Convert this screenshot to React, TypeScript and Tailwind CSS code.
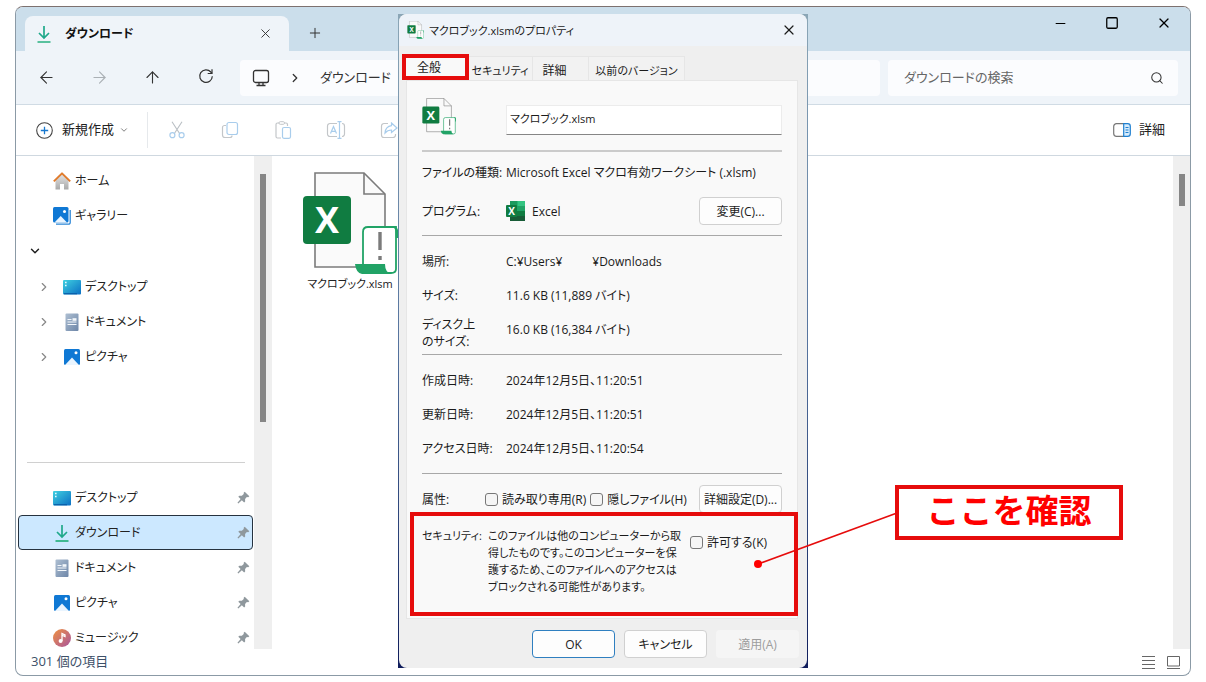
import React from "react";
import {
  ArrowLeft,
  ArrowRight,
  ArrowUp,
  ChevronDown,
  ChevronRight,
  Minus,
  Plus,
  Search,
  Square,
  X,
} from "lucide-react";

const DownloadIcon = () => (
  <svg width="18" height="18" viewBox="0 0 18 18" fill="none">
    <path d="M9 1v12M4 8l5 5 5-5" stroke="#1fa98b" strokeWidth="1.7" />
    <path d="M2.5 17h13" stroke="#27b07f" strokeWidth="1.7" />
  </svg>
);

const HomeIcon = () => (
  <svg width="18" height="18" viewBox="0 0 18 18" fill="none">
    <defs>
      <linearGradient id="home" x1="0" y1="0" x2="0" y2="1">
        <stop offset="0" stopColor="#e4e4e4" />
        <stop offset="1" stopColor="#a9a9a9" />
      </linearGradient>
    </defs>
    <path d="M2.500 8L9 2l6.500 6v9.500H11V12H7v5.500H2.500z" fill="url(#home)" />
    <path d="M.8 9.400L9 1.400l8.200 8" stroke="#e07b2c" strokeWidth="2" strokeLinejoin="round" />
  </svg>
);

const PictureIcon = ({ stacked }: { stacked?: boolean }) =>
  stacked ? (
    <svg width="18" height="18" viewBox="0 0 18 18" fill="none">
      <path d="M3 17.200h12.500a1.700 1.700 0 0 0 1.700-1.700V3" stroke="#2b86d6" strokeWidth="1.300" />
      <rect x="0" y="0" width="15.500" height="15.500" rx="1.500" fill="#0f78d4" />
      <path d="M1.500 15.500L7.700 9l6.300 6.500z" fill="#eaf5ff" />
      <circle cx="11.500" cy="4.500" r="1.500" fill="#fff" />
    </svg>
  ) : (
    <svg width="18" height="18" viewBox="0 0 18 18" fill="none">
      <rect x="1" y="1" width="16" height="16" rx="1.500" fill="#0f78d4" />
      <path d="M2 17l7-7.500 7 7.500z" fill="#eaf5ff" />
      <circle cx="13" cy="4.800" r="1.500" fill="#fff" />
    </svg>
  );

const DesktopIcon = () => (
  <svg width="18" height="18" viewBox="0 0 18 18" fill="none">
    <defs>
      <linearGradient id="desk" x1="0" y1="0" x2="1" y2="1">
        <stop offset="0" stopColor="#3fd0e0" />
        <stop offset="1" stopColor="#0b6fc4" />
      </linearGradient>
    </defs>
    <rect x="0" y="2" width="18" height="14.5" rx="1" fill="url(#desk)" />
    <path d="M2 4.5h1.6M2 7.5h1.6" stroke="#e3fbff" strokeWidth="1.4" />
    <path d="M1 15.700h13" stroke="#0a5da8" strokeWidth="1.2" />
  </svg>
);

const DocumentIcon = () => (
  <svg width="18" height="18" viewBox="0 0 18 18" fill="none">
    <defs>
      <linearGradient id="docu" x1="0" y1="0" x2="1" y2="1">
        <stop offset="0" stopColor="#aebfd2" />
        <stop offset="1" stopColor="#6d86a8" />
      </linearGradient>
    </defs>
    <rect x="2.5" y="0.5" width="13" height="17.5" rx="1" fill="url(#docu)" />
    <path d="M4.5 6.5h4M4.5 9h9M4.5 11.5h9" stroke="#f3f7fb" strokeWidth="1.2" />
    <rect x="9.5" y="5.2" width="4" height="2.6" fill="#f3f7fb" />
  </svg>
);

const MusicIcon = () => (
  <svg width="18" height="18" viewBox="0 0 18 18" fill="none">
    <defs>
      <linearGradient id="mus" x1="0" y1="0" x2="1" y2="1">
        <stop offset="0" stopColor="#f0913f" />
        <stop offset="1" stopColor="#a8559f" />
      </linearGradient>
    </defs>
    <circle cx="9" cy="9" r="9" fill="url(#mus)" />
    <circle cx="7.6" cy="12" r="2" fill="#fff" />
    <path d="M9 12V4.5l3 1.5v1.6L9.6 6.5" stroke="#fff" strokeWidth="1.3" />
  </svg>
);

const PinIcon = () => (
  <svg width="13" height="13" viewBox="0 0 14 14" fill="#8f989d">
    <path d="M8.300.8l5 4.800-1.200 1-1.500-.1-1.900 2.100.1 2.600-1.100 1.100-2.500-2.400L1.400 13.400l-.9-.7L3.900 8.600 1.400 6.200l1.100-1.100 2.700.1L7.300 3.200l-.1-1.400z" />
  </svg>
);

const MonitorIcon = () => (
  <svg width="18" height="18" viewBox="0 0 18 18" fill="none" stroke="#333" strokeWidth="1.300">
    <rect x="1.500" y="1.500" width="15" height="12" rx="2" />
    <path d="M4.500 16.500h9M7 13.500v3M11 13.500v3" />
  </svg>
);

const RefreshIcon = () => (
  <svg width="16" height="16" viewBox="0 0 16 16" fill="none" stroke="currentColor" strokeWidth="1.200">
    <path d="M14.300 8.200A6.300 6.300 0 1 1 12.800 4L14 5.300" />
    <path d="M14 1.200v4.300H9.700" />
  </svg>
);

const MacroFileIcon = ({ width, height }: { width: number; height: number }) => (
  <svg width={width} height={height} viewBox="0 0 96 104" fill="none">
    <path d="M13 1h49l21 21v73H13z" fill="#fafafa" stroke="#7b7b7b" strokeWidth="1.6" />
    <path d="M62 1v21h21" stroke="#7b7b7b" strokeWidth="1.6" />
    <rect x="1" y="24" width="48" height="48" rx="4" fill="#107c41" />
    <text x="25" y="61" textAnchor="middle" fontSize="36" fontWeight="700" fill="#fff">
      X
    </text>
    <path d="M61 94V60q0-5 5-5h28v42q0 4-5 4H64z" fill="#fff" stroke="#21a366" strokeWidth="1.8" />
    <path d="M53 92h30q0 8 6 10H60q-6-1-7-10z" fill="#21a366" />
    <path d="M78 60v18M78 84v4" stroke="#7b7b7b" strokeWidth="3.4" />
    <path d="M90 54q4 1 4 12h2V58q-1-4-6-4z" fill="#21a366" />
  </svg>
);

const ExcelIcon = () => (
  <svg width="19" height="20" viewBox="0 0 19 20" fill="none">
    <rect x="4" y="0" width="15" height="20" rx="1" fill="#21a366" />
    <path d="M4 0h7.500v5H4z" fill="#1d9a5e" />
    <path d="M11.500 0H19v5h-7.500z" fill="#33c481" />
    <path d="M4 10h15v10H4z" fill="#107c41" />
    <path d="M4 15h15v5H4z" fill="#185c37" />
    <rect x="0" y="4" width="11" height="12" rx="1" fill="#107c41" />
    <text x="5.500" y="13.600" textAnchor="middle" fontSize="10" fontWeight="700" fill="#fff">
      X
    </text>
  </svg>
);

const CutIcon = () => (
  <svg width="18" height="18" viewBox="0 0 18 18" fill="none">
    <path d="M4 .8l7.600 11.700M14 .8L6.400 12.500" stroke="#b9bfc4" strokeWidth="1.100" />
    <circle cx="4.400" cy="14.200" r="2.500" stroke="#a9cdec" strokeWidth="1.200" />
    <circle cx="13.600" cy="14.200" r="2.500" stroke="#a9cdec" strokeWidth="1.200" />
  </svg>
);

const CopyIcon = () => (
  <svg width="18" height="18" viewBox="0 0 18 18" fill="none">
    <path d="M5 4.500H3.500a2 2 0 0 0-2 2v7.500a2.500 2.500 0 0 0 2.500 2.500h5a2 2 0 0 0 2-2" stroke="#c3c6c9" strokeWidth="1.200" />
    <rect x="6" y="1.500" width="10.500" height="12" rx="2" stroke="#a9cdec" strokeWidth="1.200" />
  </svg>
);

const PasteIcon = () => (
  <svg width="18" height="18" viewBox="0 0 18 18" fill="none">
    <path d="M7 17H3.500a1.500 1.500 0 0 1-1.500-1.500V3.500A1.500 1.500 0 0 1 3.500 2H12a1.500 1.500 0 0 1 1.500 1.500V5" stroke="#c3c6c9" strokeWidth="1.200" />
    <rect x="5" y=".7" width="5.500" height="2.600" rx="1.200" fill="#fff" stroke="#c3c6c9" />
    <rect x="8.500" y="6.500" width="8" height="10.800" rx="1.500" stroke="#a9cdec" strokeWidth="1.200" />
  </svg>
);

const RenameIcon = () => (
  <svg width="20" height="18" viewBox="0 0 20 18" fill="none">
    <path d="M11 2.500H4A2.500 2.500 0 0 0 1.500 5v8A2.500 2.500 0 0 0 4 15.500h7M16 2.500a2.500 2.500 0 0 1 2.500 2.500v8a2.500 2.500 0 0 1-2.500 2.500" stroke="#c3c6c9" strokeWidth="1.200" />
    <path d="M4.500 12.500L7.500 5.500l3 7M5.500 10.300h4M11.500.7h4M11.500 17.300h4M13.500.7v16.600" stroke="#a9cdec" strokeWidth="1.200" />
  </svg>
);

const ShareIcon = () => (
  <svg width="18" height="18" viewBox="0 0 18 18" fill="none">
    <path d="M8 2.500H4A2.500 2.500 0 0 0 1.500 5v9A2.500 2.500 0 0 0 4 16.500h9a2.500 2.500 0 0 0 2.500-2.500v-1" stroke="#c3c6c9" strokeWidth="1.200" />
    <path d="M11.500 2l5.500 5-5.500 4.500V9q-4 0-6.500 3 .5-6.500 6.500-7.300z" stroke="#a9cdec" strokeWidth="1.200" />
  </svg>
);

const DetailPaneIcon = () => (
  <svg width="18" height="14" viewBox="0 0 18 14" fill="none">
    <path d="M11 .7H3.500A2.800 2.800 0 0 0 .7 3.500v7a2.800 2.800 0 0 0 2.800 2.800H11" stroke="#777" strokeWidth="1.200" />
    <path d="M10.700.7h4A2.600 2.600 0 0 1 17.300 3.300v7.400a2.600 2.600 0 0 1-2.600 2.600h-4z" fill="#d6ebfb" stroke="#1f7fd0" strokeWidth="1.200" />
    <path d="M12.500 4.500h3M12.500 7h3M12.500 9.500h3" stroke="#1f7fd0" />
  </svg>
);

interface NavRowProps {
  icon: React.ReactNode;
  label: string;
  pinned?: boolean;
  nested?: boolean;
  selected?: boolean;
}

const NavRow = ({ icon, label, pinned, nested, selected }: NavRowProps) => (
  <a
    href="#"
    className={`flex h-[35px] shrink-0 items-center gap-1 ml-0.5 mr-px border rounded-sm text-xs text-[#222] ${
      selected ? "border-[#26323f] bg-[#cce8ff]" : "border-transparent"
    } ${nested ? "pl-[18px]" : "pl-[34px]"}`}
  >
    {nested && <ChevronRight size={14} strokeWidth={2} className="mr-2 text-[#888]" />}
    {icon}
    <span>{label}</span>
    {pinned && (
      <span className="ml-auto mr-0.5">
        <PinIcon />
      </span>
    )}
  </a>
);

const toolbarItems = [
  { label: "切り取り", icon: <CutIcon /> },
  { label: "コピー", icon: <CopyIcon /> },
  { label: "貼り付け", icon: <PasteIcon /> },
  { label: "名前の変更", icon: <RenameIcon /> },
  { label: "共有", icon: <ShareIcon /> },
];

const Explorer = () => (
  <div className="flex-1 min-h-0 flex flex-col border border-[#8b9aa6] border-t-[#7d716f] rounded-lg overflow-hidden bg-white">
    <header className="flex h-11 shrink-0 bg-[#cbdeeb]">
      <div className="flex items-center w-[264px] mt-[9px] ml-[9px] pl-[10px] pr-4 rounded-t-lg bg-[#eff4f9]">
        <DownloadIcon />
        <span className="ml-3 text-xs font-semibold text-[#111]">ダウンロード</span>
        <button aria-label="タブを閉じる" className="ml-auto">
          <X size={15} strokeWidth={1.500} className="text-[#333]" />
        </button>
      </div>
      <button aria-label="新しいタブ" className="ml-[18px] mt-2">
        <Plus size={16} strokeWidth={1.500} className="text-[#333]" />
      </button>
      <div className="ml-auto flex gap-[37px] pr-[18px] pb-3 items-center">
        <button aria-label="最小化">
          <Minus size={15} strokeWidth={1.800} />
        </button>
        <button aria-label="最大化">
          <Square size={14} strokeWidth={2.200} />
        </button>
        <button aria-label="閉じる">
          <X size={16} strokeWidth={1.800} />
        </button>
      </div>
    </header>

    <nav className="flex h-[54px] shrink-0 items-center gap-2 pl-1 pr-3 bg-[#eff4f9] border-b border-[#d0dbe4]">
      <div className="flex text-[#333]">
        <button aria-label="戻る" className="flex w-[53px] justify-center">
          <ArrowLeft size={19} strokeWidth={1.400} />
        </button>
        <button aria-label="進む" className="flex w-[53px] justify-center text-[#aab0b5]">
          <ArrowRight size={19} strokeWidth={1.400} />
        </button>
        <button aria-label="上へ" className="flex w-[53px] justify-center">
          <ArrowUp size={19} strokeWidth={1.400} />
        </button>
        <button aria-label="更新" className="flex w-[53px] justify-center">
          <RefreshIcon />
        </button>
      </div>
      <div className="flex flex-1 items-center h-9 pl-3 rounded bg-[#fbfcfe] text-[#333]">
        <MonitorIcon />
        <ChevronRight size={14} strokeWidth={2.200} className="ml-[18px]" />
        <a href="#" className="ml-[18px] text-[13px]">
          ダウンロード
        </a>
      </div>
      <div className="flex w-[290px] items-center h-9 pl-4 pr-[14px] rounded bg-[#fbfcfe]">
        <input
          aria-label="ダウンロードの検索"
          placeholder="ダウンロードの検索"
          className="flex-1 min-w-0 bg-transparent text-[13px] placeholder:text-[#666] outline-none"
        />
        <Search size={14} strokeWidth={1.800} className="text-[#333]" />
      </div>
    </nav>

    <div className="flex h-[51px] shrink-0 items-center border-b border-[#cfd8e0]">
      <button className="flex items-center pl-5 pr-[18px] h-9 border-r border-[#e6e9ec] text-[13px] text-[#222]">
        <svg width="17" height="17" viewBox="0 0 17 17" fill="none" className="mr-[9px]">
          <circle cx="8.500" cy="8.500" r="7.800" stroke="#444" strokeWidth="1.100" />
          <path d="M8.500 4.800v7.400M4.800 8.500h7.400" stroke="#1878cf" strokeWidth="1.300" />
        </svg>
        新規作成
        <ChevronDown size={10} className="ml-[5px] text-[#666]" />
      </button>
      <div className="flex pl-0.5">
        {toolbarItems.map((item) => (
          <button key={item.label} aria-label={item.label} className="flex w-[53px] justify-center">
            {item.icon}
          </button>
        ))}
      </div>
      <button className="ml-auto mr-[25px] flex items-center gap-2 text-[13px] text-[#222]">
        <DetailPaneIcon />
        詳細
      </button>
    </div>

    <div className="flex flex-1 min-h-0">
      <aside className="flex w-[238px] shrink-0 flex-col overflow-hidden pt-[7px]">
        <NavRow icon={<HomeIcon />} label="ホーム" />
        <NavRow icon={<PictureIcon stacked />} label="ギャラリー" />
        <div className="flex h-9 shrink-0 items-center pl-3">
          <ChevronDown size={14} strokeWidth={2.500} className="text-[#222]" />
        </div>
        <NavRow nested icon={<DesktopIcon />} label="デスクトップ" />
        <NavRow nested icon={<DocumentIcon />} label="ドキュメント" />
        <NavRow nested icon={<PictureIcon />} label="ピクチャ" />
        <hr className="mt-[88px] mb-[17px] ml-[11px] mr-[9px] border-[#d0d0d0]" />
        <NavRow pinned icon={<DesktopIcon />} label="デスクトップ" />
        <NavRow pinned selected icon={<DownloadIcon />} label="ダウンロード" />
        <NavRow pinned icon={<DocumentIcon />} label="ドキュメント" />
        <NavRow pinned icon={<PictureIcon />} label="ピクチャ" />
        <NavRow pinned icon={<MusicIcon />} label="ミュージック" />
      </aside>
      <div className="w-[18px] bg-[#efefef] pt-[18px]">
        <div className="mx-auto h-[248px] w-1.5 bg-[#868686]" />
      </div>
      <main className="flex-1 pl-[30px] pt-4">
        <figure className="flex w-24 flex-col items-center">
          <MacroFileIcon width={96} height={104} />
          <figcaption className="whitespace-nowrap text-[11px] leading-4 text-[#222]">
            マクロブック.xlsm
          </figcaption>
        </figure>
      </main>
      <div className="w-[17px] bg-[#efefef] pt-[18px]">
        <div className="mx-auto h-8 w-1.5 bg-[#868686]" />
      </div>
    </div>

    <footer className="flex h-[26px] shrink-0 items-center justify-between pl-[15px] pr-[10px] text-[13px] text-[#3d5068]">
      <span>301 個の項目</span>
      <div className="flex gap-3">
        <svg width="13" height="13" viewBox="0 0 13 13" stroke="#666">
          <path d="M0 .5h13M0 4.500h13M0 8.500h13M0 12.500h13" />
        </svg>
        <svg width="13" height="13" viewBox="0 0 13 13" fill="none" stroke="#666">
          <path d="M.5.5h12v9.500H.5zM0 12.500h13" />
        </svg>
      </div>
    </footer>
  </div>
);

interface RowProps {
  label: React.ReactNode;
  tall?: boolean;
  children: React.ReactNode;
}

const Row = ({ label, tall, children }: RowProps) => (
  <div className="flex h-[34px] items-center">
    <div className={`w-[84px] shrink-0 whitespace-nowrap ${tall ? "pt-2" : ""}`}>{label}</div>
    {children}
  </div>
);

const Check = ({ label }: { label: string }) => (
  <label className="flex items-center gap-1 whitespace-nowrap">
    <input type="checkbox" className="appearance-none size-[13px] rounded-[3px] border border-[#777] bg-[#f5f5f5]" />
    {label}
  </label>
);

const tabs = [
  { label: "セキュリティ", style: "w-[65px]" },
  { label: "詳細", style: "w-14 pr-3 text-xs" },
  { label: "以前のバージョン", style: "w-[96px]" },
];

const dialogButton = "h-7 w-[83px] rounded border border-[#d0d0d0] bg-[#fdfdfd]";

const PropertiesDialog = () => (
  <div
    role="dialog"
    aria-label="マクロブック.xlsmのプロパティ"
    className="absolute left-[398px] top-[14px] w-[410px] px-px bg-linear-to-b from-[#8ba6b6] via-[#56749f] to-[#101d5c] text-xs leading-[17px] text-[#1b1b1b]"
  >
    <div className="rounded-lg overflow-hidden bg-[#efefef] pb-[10px]">
      <div className="flex h-8 items-center gap-[5px] pl-2 pr-[10px] bg-[#eef3f9]">
        <MacroFileIcon width={17} height={18} />
        <span className="text-[11px]">マクロブック.xlsmのプロパティ</span>
        <button aria-label="閉じる" className="ml-auto">
          <X size={16} strokeWidth={1.800} />
        </button>
      </div>

      <div role="tablist" className="flex mt-[10px] ml-[7px] h-6 text-[11px]">
        <button role="tab" aria-selected className="relative w-[62px] bg-[#f9f9f9] pr-4 text-xs">
          全般
          <span className="absolute -left-1 -top-0.5 -right-px bottom-0 border-4 border-[#e60c0c]" />
        </button>
        {tabs.map((tab) => (
          <button
            key={tab.label}
            role="tab"
            className={`${tab.style} border border-b-0 border-l-0 border-[#e6e6e6] bg-[#f2f2f2] pt-1 whitespace-nowrap`}
          >
            {tab.label}
          </button>
        ))}
      </div>

      <div className="ml-[7px] mr-[9px] border border-[#e6e6e6] bg-[#f9f9f9] px-[15px] pt-[17px]">
        <div className="flex h-10 items-center">
          <div className="w-[84px] pb-1">
            <MacroFileIcon width={34} height={37} />
          </div>
          <input
            aria-label="ファイル名"
            defaultValue="マクロブック.xlsm"
            className="flex-1 min-w-0 h-[30px] mt-1 px-[3px] pb-1 border border-[#ececec] border-b-[#868686] bg-white text-[11px] outline-none"
          />
        </div>
        <hr className="mt-3 mb-[3px] border-t-2 border-[#cbcbcb]" />
        <Row label="ファイルの種類:">Microsoft Excel マクロ有効ワークシート (.xlsm)</Row>
        <div className="mt-[5px]">
          <Row label="プログラム:">
            <ExcelIcon />
            <span className="ml-[7px]">Excel</span>
            <button className={`${dialogButton} ml-auto`}>変更(C)...</button>
          </Row>
        </div>
        <hr className="mt-[7px] mb-2 border-[#a8a8a8]" />
        <Row label="場所:">
          <span>C:¥Users¥</span>
          <span className="ml-[30px]">¥Downloads</span>
        </Row>
        <Row label="サイズ:">11.6 KB (11,889 バイト)</Row>
        <Row
          tall
          label={
            <>
              ディスク上
              <br />
              のサイズ:
            </>
          }
        >
          16.0 KB (16,384 バイト)
        </Row>
        <hr className="my-2 border-[#a8a8a8]" />
        <Row label="作成日時:">2024年12月5日、11:20:51</Row>
        <Row label="更新日時:">2024年12月5日、11:20:51</Row>
        <Row label="アクセス日時:">2024年12月5日、11:20:54</Row>
        <hr className="my-2 border-[#a8a8a8]" />
        <div className="flex h-[34px] items-center">
          <div className="w-[63px]">属性:</div>
          <Check label="読み取り専用(R)" />
          <div className="ml-1">
            <Check label="隠しファイル(H)" />
          </div>
          <button className={`${dialogButton} ml-auto whitespace-nowrap`}>詳細設定(D)...</button>
        </div>
        <div className="relative flex h-[102px] pt-[11px]">
          <div className="w-[66px] shrink-0 whitespace-nowrap text-[11px]">セキュリティ:</div>
          <p className="w-[202px] whitespace-nowrap text-[11px]">
            このファイルは他のコンピューターから取
            <br />
            得したものです。このコンピューターを保
            <br />
            護するため、このファイルへのアクセスは
            <br />
            ブロックされる可能性があります。
          </p>
          <div className="pt-[7px]">
            <Check label="許可する(K)" />
          </div>
          <div className="absolute -left-3 -right-4 -top-1 bottom-0.5 border-4 border-[#e60c0c] pointer-events-none" />
        </div>
      </div>

      <div className="mt-[11px] mr-2 flex justify-end gap-[9px]">
        <button className="h-7 w-[83px] rounded border border-[#2f7fc0] bg-[#fdfdfd]">OK</button>
        <button className={dialogButton}>キャンセル</button>
        <button disabled className="h-7 w-[83px] rounded bg-[#f5f5f5] text-[#9d9d9d]">
          適用(A)
        </button>
      </div>
    </div>
  </div>
);

const App = () => (
  <div className="relative flex flex-col h-screen bg-white px-[15px] py-1.5 font-['Open_Sans','Noto_Sans_CJK_JP',sans-serif] [font-feature-settings:'palt']">
    <Explorer />
    <PropertiesDialog />
    <svg
      className="absolute left-[750px] top-[505px] pointer-events-none"
      width="150"
      height="66"
      viewBox="0 0 150 66"
    >
      <path d="M8 59L147 8" stroke="#e60c0c" strokeWidth="1.600" />
      <circle cx="8" cy="59" r="4" fill="#f00" />
    </svg>
    <div className="absolute left-[895px] top-[485px] flex h-[55px] w-[228px] items-center justify-center border-4 border-[#e60c0c] bg-white pb-1 text-[33px] leading-none font-bold text-[#f00] [font-feature-settings:normal]">
      ここを確認
    </div>
  </div>
);

export default App;
